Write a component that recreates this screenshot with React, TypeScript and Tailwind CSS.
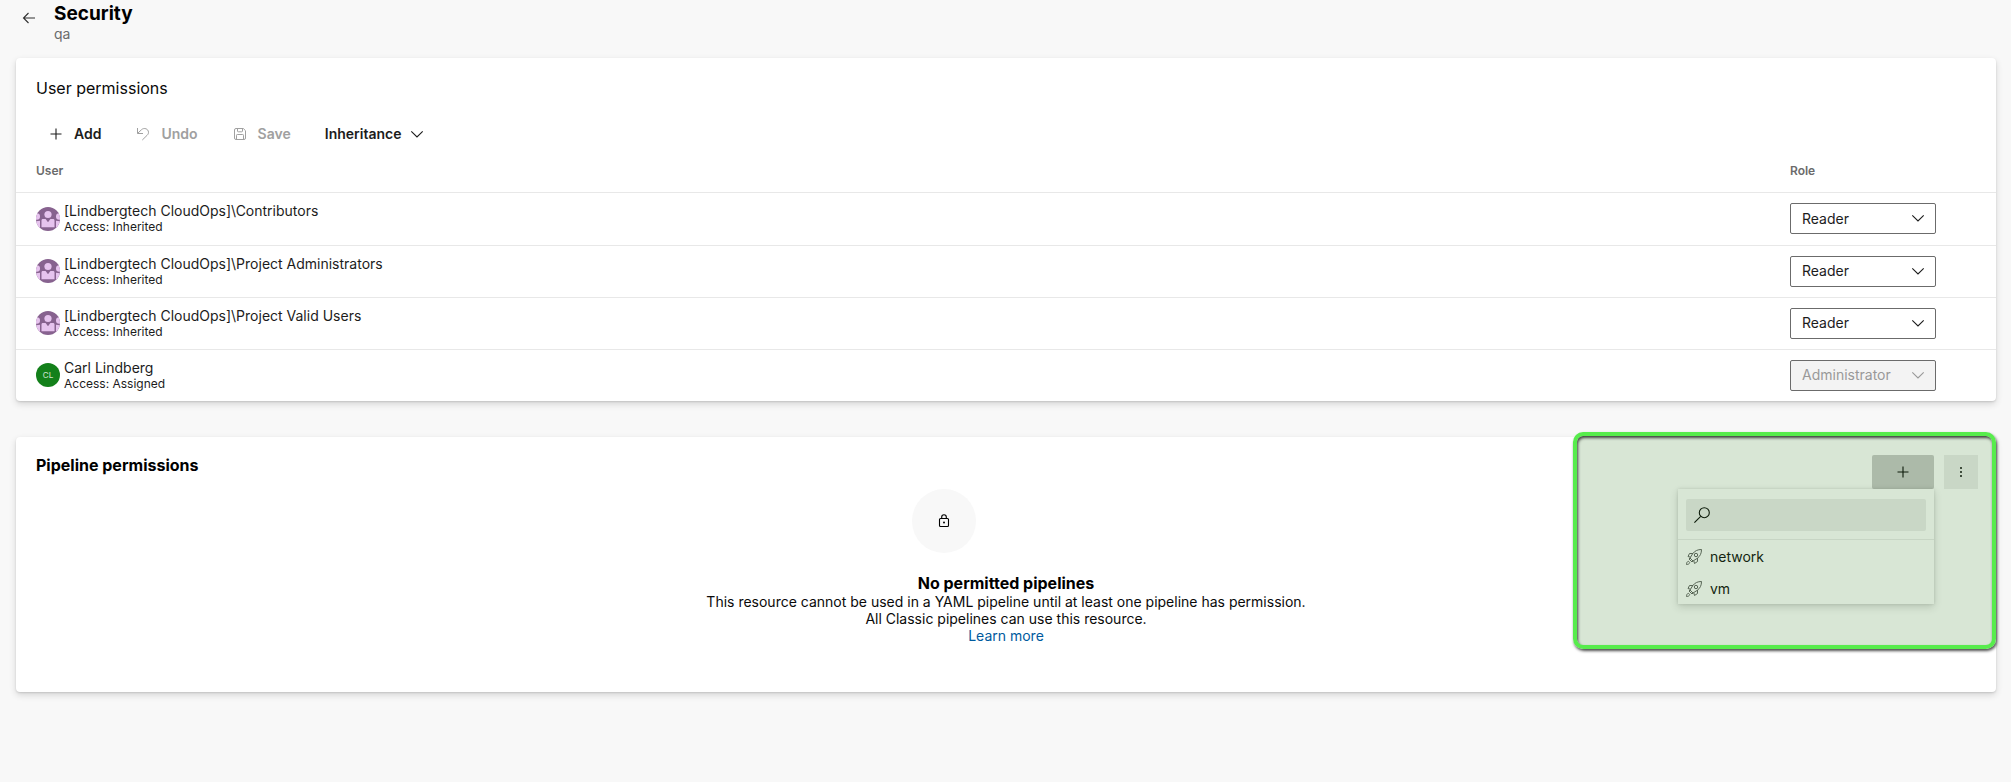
import React from "react";

type IconProps = { className?: string };

const PlusIcon = ({ className }: IconProps) => (
  <svg viewBox="0 0 16 16" className={className} fill="none" stroke="currentColor" strokeWidth="1.1" aria-hidden="true">
    <path d="M8 2.5v11M2.5 8h11" />
  </svg>
);

const BackIcon = ({ className }: IconProps) => (
  <svg viewBox="0 0 16 16" className={className} fill="none" stroke="currentColor" strokeWidth="1.1" aria-hidden="true">
    <path d="M14 8H2.5M7.5 3 2.500 8l5 5" />
  </svg>
);

const UndoIcon = ({ className }: IconProps) => (
  <svg viewBox="0 0 16 16" className={className} fill="none" stroke="currentColor" strokeWidth="1" aria-hidden="true">
    <path d="M2.500 2v5.500h5.500M2.700 7.300 6.500 3.700C9 1.300 13.500 2.800 13.500 6.300c0 1.400-.6 2.200-1.500 3.100L7.300 14" />
  </svg>
);

const SaveIcon = ({ className }: IconProps) => (
  <svg viewBox="0 0 16 16" className={className} fill="none" stroke="currentColor" strokeWidth="1" aria-hidden="true">
    <path d="M4 2.500h7.300l2.200 2.200V12A1.500 1.500 0 0 1 12 13.500H4A1.500 1.500 0 0 1 2.500 12V4A1.500 1.500 0 0 1 4 2.500Z" />
    <path d="M5.500 2.500V5a.8.8 0 0 0 .8.800h3.400a.8.8 0 0 0 .8-.8V2.500M4.500 13.500V9.300a.8.8 0 0 1 .8-.8h5.400a.8.8 0 0 1 .8.800v4.200" />
  </svg>
);

const ChevronIcon = ({ className }: IconProps) => (
  <svg viewBox="0 0 16 16" className={className} fill="none" stroke="currentColor" strokeWidth="1.1" aria-hidden="true">
    <path d="m2.300 5.300 5.700 5.700 5.700-5.700" />
  </svg>
);

const LockIcon = ({ className }: IconProps) => (
  <svg viewBox="0 0 16 16" className={className} fill="none" stroke="currentColor" strokeWidth="1.1" aria-hidden="true">
    <rect x="3.500" y="5.500" width="9" height="8" rx="1" />
    <path d="M5.700 5.500V4a2.300 2.300 0 0 1 4.600 0v1.500" />
    <circle cx="8" cy="9.500" r="1" fill="currentColor" stroke="none" />
  </svg>
);

const SearchIcon = ({ className }: IconProps) => (
  <svg viewBox="0 0 16 16" className={className} fill="none" stroke="currentColor" strokeWidth="1.1" aria-hidden="true">
    <circle cx="10.300" cy="5.700" r="5" />
    <path d="M6.700 9.300.4 15.600" />
  </svg>
);

const MoreIcon = ({ className }: IconProps) => (
  <svg viewBox="0 0 16 16" className={className} fill="currentColor" aria-hidden="true">
    <path d="M7 3h2v2H7zM7 7h2v2H7zM7 11h2v2H7z" />
  </svg>
);

const RocketIcon = ({ className }: IconProps) => (
  <svg viewBox="0 0 16 16" className={className} fill="none" stroke="currentColor" strokeWidth="1" strokeLinejoin="round" aria-hidden="true">
    <path d="M15.500.5c-3.800 0-6.700 1.300-8.800 4.200L4 9l3 3 4.300-2.700c2.900-2.100 4.200-5 4.200-8.800Z" />
    <path d="M7 4.500H3.500L2 7.500l2.500.7M11.500 9v3.500l-3 2-.7-2.700M4 9l-1 1 3 3 1-1" />
    <circle cx="10" cy="6" r="1.700" />
    <path d="M2.500 12.300C1.200 12.500.6 13.500.5 15.500c2-.1 3-.7 3.200-2Z" />
  </svg>
);

const GroupAvatar = () => (
  <svg viewBox="0 0 24 24" className="size-6 shrink-0 overflow-hidden rounded-full" aria-hidden="true">
    <rect width="24" height="24" fill="#87628f" />
    <g fill="#e6c3ee">
      <circle cx="12" cy="7.500" r="3.600" />
      <circle cx=".8" cy="9.500" r="3.200" />
      <circle cx="23.200" cy="9.500" r="3.200" />
      <path d="M0 14.300 4 13.800V21H0zM24 14.300l-4-.5V21h4z" />
      <path d="M5.500 13.500c0-1 .6-1.500 1.400-1.500h2.700l2.400 3.300 2.400-3.300h2.700c.8 0 1.400.5 1.400 1.500v6.700h-13z" />
    </g>
  </svg>
);

const PersonAvatar = ({ initials }: { initials: string }) => (
  <span className="flex size-6 shrink-0 items-center justify-center rounded-full bg-[#13801a] text-[8px] text-white/80">
    {initials}
  </span>
);

const users = [
  { name: "[Lindbergtech CloudOps]\\Contributors", access: "Inherited", role: "Reader" },
  { name: "[Lindbergtech CloudOps]\\Project Administrators", access: "Inherited", role: "Reader" },
  { name: "[Lindbergtech CloudOps]\\Project Valid Users", access: "Inherited", role: "Reader" },
  { name: "Carl Lindberg", access: "Assigned", role: "Administrator", initials: "CL", locked: true },
];

const pipelines = ["network", "vm"];

const cardClass = "rounded bg-white shadow-[0_3px_7px_rgba(0,0,0,0.14),0_1px_2px_rgba(0,0,0,0.12)]";

function RoleSelect({ user, role, locked }: { user: string; role: string; locked?: boolean }) {
  return (
    <div className="relative h-[31px] w-[146px]">
      <select
        aria-label={`Role for ${user}`}
        defaultValue={role}
        disabled={locked}
        className="size-full appearance-none rounded-xs border border-[#6b6b6b] bg-white pl-[11px] text-sm text-[#1c1c1c] disabled:bg-[#f3f3f3] disabled:text-[#999] disabled:opacity-100"
      >
        <option>Reader</option>
        <option>User</option>
        <option>Administrator</option>
      </select>
      <ChevronIcon
        className={`pointer-events-none absolute top-[7px] right-[10px] size-4 ${locked ? "text-[#999]" : "text-[#1c1c1c]"}`}
      />
    </div>
  );
}

function UserPermissions() {
  return (
    <section className={cardClass}>
      <h2 className="px-5 pt-[18px] text-base leading-6 text-[#0a0a0a]">User permissions</h2>
      <div className="mt-[18px] flex h-8 items-center gap-[34px] pl-8 text-sm font-semibold">
        <button className="flex items-center gap-[10px] text-[#1c1c1c]">
          <PlusIcon className="size-4" />
          Add
        </button>
        <button disabled className="flex items-center gap-[10px] text-[#a0a0a0]">
          <UndoIcon className="size-4" />
          Undo
        </button>
        <button disabled className="flex items-center gap-[10px] text-[#a0a0a0]">
          <SaveIcon className="size-4" />
          Save
        </button>
        <button className="flex items-center gap-2 text-[#1c1c1c]">
          Inheritance
          <ChevronIcon className="size-4" />
        </button>
      </div>
      <table className="w-full text-left">
        <thead>
          <tr className="h-[42px] text-xs text-[#6b6b6b]">
            <th className="pl-5 font-semibold">User</th>
            <th className="w-[206px] font-semibold">Role</th>
          </tr>
        </thead>
        <tbody>
          {users.map((u) => (
            <tr key={u.name} className="h-[52px] border-t border-[#e8e8e8] first:h-[53px]">
              <td className="pl-5">
                <div className="flex items-center gap-1">
                  {u.initials ? <PersonAvatar initials={u.initials} /> : <GroupAvatar />}
                  <div>
                    <div className="text-sm leading-4 text-[#1c1c1c]">{u.name}</div>
                    <div className="text-xs leading-[15px] text-[#1c1c1c]">Access: {u.access}</div>
                  </div>
                </div>
              </td>
              <td>
                <RoleSelect user={u.name} role={u.role} locked={u.locked} />
              </td>
            </tr>
          ))}
        </tbody>
      </table>
    </section>
  );
}

function PipelinePicker() {
  return (
    <div className="absolute -top-[5px] right-0 h-[217px] w-[423px]">
      <div className="flex justify-end gap-[10px] pt-[23px] pr-[18px]">
        <div className="relative">
          <button aria-label="Add pipeline" className="flex h-[34px] w-[62px] items-center justify-center rounded-xs bg-[#c8c8c8] text-black">
            <PlusIcon className="size-4" />
          </button>
          <div className="absolute top-full right-0 w-64 bg-white shadow-[0_3px_8px_rgba(0,0,0,0.16),0_0_3px_rgba(0,0,0,0.12)]">
            <div className="border-b border-[#eaeaea] px-2 pt-[10px] pb-2">
              <label className="flex h-8 items-center gap-2 rounded-xs bg-[#ededed] px-2">
                <SearchIcon className="size-4 text-black" />
                <input aria-label="Search pipelines" className="min-w-0 flex-1 bg-transparent text-sm outline-none" />
              </label>
            </div>
            <ul>
              {pipelines.map((p) => (
                <li key={p}>
                  <button className="flex h-8 w-full items-center gap-2 px-2 pt-px text-sm text-[#0a0a0a]">
                    <RocketIcon className="size-4 text-[#606060]" />
                    {p}
                  </button>
                </li>
              ))}
            </ul>
          </div>
        </div>
        <button aria-label="More actions" className="flex size-[34px] items-center justify-center bg-[#ededed] text-[#404040]">
          <MoreIcon className="size-4" />
        </button>
      </div>
      <div className="pointer-events-none absolute inset-0 rounded-[10px] border-4 border-[#57ec4c] bg-[rgba(60,130,45,0.2)] shadow-[1px_2px_3px_rgba(0,0,0,0.7),inset_1px_2px_3px_rgba(0,0,0,0.7)]" />
    </div>
  );
}

function PipelinePermissions() {
  return (
    <section className={`relative ${cardClass}`}>
      <h2 className="px-5 pt-4 text-base leading-6 font-bold text-black">Pipeline permissions</h2>
      <div className="flex flex-col items-center pt-3 pb-12 text-center text-sm leading-[17px] text-[#0a0a0a]">
        <div className="w-[188px]">
          <div className="flex size-16 items-center justify-center rounded-full bg-[#f8f8f8]">
            <LockIcon className="size-4 text-black" />
          </div>
        </div>
        <h3 className="mt-5 text-base leading-5 font-bold text-black">No permitted pipelines</h3>
        <p>This resource cannot be used in a YAML pipeline until at least one pipeline has permission.</p>
        <p>All Classic pipelines can use this resource.</p>
        <a href="#learn-more" className="text-[#005a9e]">Learn more</a>
      </div>
      <PipelinePicker />
    </section>
  );
}

export default function App() {
  return (
    <div className="min-h-screen bg-[#f8f8f8] font-[Inter,'Liberation_Sans',sans-serif] text-black">
      <header className="flex h-[58px] items-start gap-[17px] pl-[21px]">
        <button aria-label="Back" className="mt-[10px]">
          <BackIcon className="size-4 text-[#303030]" />
        </button>
        <div>
          <h1 className="text-[19px] leading-7 font-bold">Security</h1>
          <p className="text-sm leading-3 text-[#6b6b6b]">qa</p>
        </div>
      </header>
      <main className="flex flex-col gap-9 pr-[15px] pl-4">
        <UserPermissions />
        <PipelinePermissions />
      </main>
    </div>
  );
}
